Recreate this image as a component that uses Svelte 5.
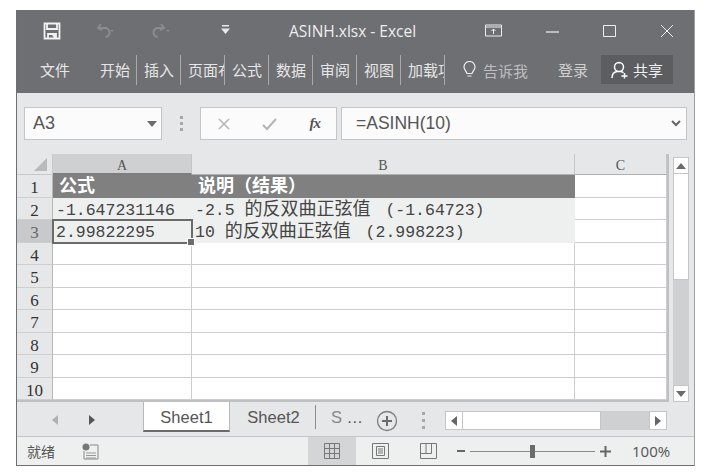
<script>
  const tabs = ['开始', '插入', '页面布', '公式', '数据', '审阅', '视图', '加载项'];
  const rows = [
    { n: 1, a: ['', '公式', ''], b: ['', '说明（结果）', ''], kind: 'head' },
    { n: 2, a: ['-1.647231146', '', ''], b: ['-2.5 ', '的反双曲正弦值', ' (-1.64723)'], kind: 'band' },
    { n: 3, a: ['2.99822295', '', ''], b: ['10 ', '的反双曲正弦值', ' (2.998223)'], kind: 'band' },
    { n: 4 }, { n: 5 }, { n: 6 }, { n: 7 }, { n: 8 }, { n: 9 }, { n: 10 }
  ];
</script>

{#snippet cellText(parts)}
  {#if parts}{parts[0]}{#if parts[1]}<span class="cjk">{parts[1]}</span>{/if}{parts[2]}{/if}
{/snippet}

<div class="window">
  <div class="titlebar">
    <div class="qat">
      <svg class="save" width="18" height="18" viewBox="0 0 18 18"><path d="M1.500 1.500h15v15h-15zM4 2v5h10V2M5 16v-4h8v4M9.500 13.500h2v2" fill="none" stroke="#f2f2f2" stroke-width="1.800"/></svg>
      <svg class="undo" width="20" height="16" viewBox="0 0 20 16"><path d="M5 1L2 5l4 2M2.500 5h6a4.500 4.500 0 0 1 1 9" fill="none" stroke="#8b8c8f" stroke-width="2"/><path d="M14 7h4l-2 2z" fill="#8b8c8f"/></svg>
      <svg class="redo" width="20" height="16" viewBox="0 0 20 16"><path d="M10 1l3 4-4 2M12.500 5h-5a4.500 4.500 0 0 0-1 9" fill="none" stroke="#8b8c8f" stroke-width="2"/><path d="M15 7h4l-2 2z" fill="#8b8c8f"/></svg>
      <svg class="more" width="9" height="9" viewBox="0 0 9 9"><path d="M1 0h7v1.500H1zM0 3.500h9L4.500 9z" fill="#e8e8e8"/></svg>
    </div>
    <div class="doc">ASINH.xlsx - Excel</div>
    <div class="winctl">
      <svg width="17" height="14" viewBox="0 0 17 14"><path d="M.5 1h16v11H.5zM1 3h15M8.500 10V5M6.500 7l2-2 2 2" fill="none" stroke="#eee" stroke-width="1"/></svg>
      <svg width="13" height="14" viewBox="0 0 13 14"><path d="M0 8h13" stroke="#eee" stroke-width="1.200"/></svg>
      <svg width="13" height="14" viewBox="0 0 13 14"><path d="M.5 1.500h12v11H.5z" fill="none" stroke="#eee" stroke-width="1"/></svg>
      <svg width="14" height="14" viewBox="0 0 14 14"><path d="M1 1l12 12M13 1L1 13" stroke="#eee" stroke-width="1"/></svg>
    </div>
  </div>

  <div class="menubar">
    <span class="file">文件</span>
    <div class="tabs">
      {#each tabs as t}
        <span class="tab">{t}</span>
      {/each}
    </div>
    <span class="tell">
      <svg width="13" height="18" viewBox="0 0 13 18"><path d="M4 12.500C3.500 10 1 9 1 6a5.500 5.500 0 0 1 11 0c0 3-2.500 4-3 6.500zM4.500 15h4" fill="none" stroke="#eee" stroke-width="1.200"/></svg>
      告诉我
    </span>
    <span class="login">登录</span>
    <span class="share">
      <svg width="18" height="18" viewBox="0 0 18 18"><path d="M8 1.500a4.500 4.500 0 0 1 0 9a4.500 4.500 0 0 1 0-9zM1 17c0-4 2-6 5-6.500M10 10.500c1 .2 1.800.6 2.500 1.200M13.500 12v5.500M10.500 15h6" fill="none" stroke="#fff" stroke-width="1.500"/></svg>
      共享
    </span>
  </div>

  <div class="formula">
    <div class="box name">
      <span>A3</span>
      <svg width="10" height="6" viewBox="0 0 10 6"><path d="M0 0h10L5 6z" fill="#6b6b6b"/></svg>
    </div>
    <div class="grip"><i></i><i></i><i></i></div>
    <div class="box fx">
      <svg width="14" height="14" viewBox="0 0 14 14"><path d="M2 2l10 10M12 2L2 12" stroke="#b4b4b4" stroke-width="1.500"/></svg>
      <svg width="16" height="14" viewBox="0 0 16 14"><path d="M1 8l4 4 9-10" fill="none" stroke="#b4b4b4" stroke-width="2"/></svg>
      <span class="fxlabel">fx</span>
    </div>
    <div class="box input">
      <span>=ASINH(10)</span>
      <svg width="10" height="7" viewBox="0 0 10 7"><path d="M1 1l4 4 4-4" fill="none" stroke="#666" stroke-width="2"/></svg>
    </div>
  </div>

  <div class="sheet">
    <div class="grid">
      <div class="corner"><svg width="13" height="13" viewBox="0 0 13 13"><path d="M13 0v13H0z" fill="#b9babb"/></svg></div>
      <div class="colhead sel">A</div>
      <div class="colhead">B</div>
      <div class="colhead">C</div>
      {#each rows as r}
        <div class="rowhead" class:sel={r.n === 3}>{r.n}</div>
        <div class="cell {r.kind ?? ''}" class:active={r.n === 3}>
          {@render cellText(r.a)}
          {#if r.n === 3}<span class="handle"></span>{/if}
        </div>
        <div class="cell {r.kind ?? ''}">{@render cellText(r.b)}</div>
        <div class="cell"></div>
      {/each}
    </div>
    <div class="vscroll">
      <div class="sbtn"><svg width="10" height="6" viewBox="0 0 10 6"><path d="M5 0l5 6H0z" fill="#6b6b6b"/></svg></div>
      <div class="thumb"></div>
      <div class="track"></div>
      <div class="sbtn"><svg width="10" height="6" viewBox="0 0 10 6"><path d="M0 0h10L5 6z" fill="#6b6b6b"/></svg></div>
    </div>
  </div>

  <div class="tabbar">
    <div class="nav">
      <svg width="6" height="10" viewBox="0 0 6 10"><path d="M6 0v10L0 5z" fill="#b0b0b0"/></svg>
      <svg width="6" height="10" viewBox="0 0 6 10"><path d="M0 0v10l6-5z" fill="#555"/></svg>
    </div>
    <div class="stab on">Sheet1</div>
    <div class="stab">Sheet2</div>
    <div class="stab cut"><span class="cutS">S</span> …</div>
    <svg class="add" width="22" height="22" viewBox="0 0 22 22"><circle cx="11" cy="11" r="9.500" fill="none" stroke="#7d7d7d" stroke-width="1.300"/><path d="M11 6v10M6 11h10" stroke="#6b6b6b" stroke-width="2"/></svg>
    <div class="grip small"><i></i><i></i><i></i></div>
    <div class="hscroll">
      <div class="hbtn"><svg width="6" height="10" viewBox="0 0 6 10"><path d="M6 0v10L0 5z" fill="#666"/></svg></div>
      <div class="hthumb"></div>
      <div class="htrack"></div>
      <div class="hbtn"><svg width="6" height="10" viewBox="0 0 6 10"><path d="M0 0v10l6-5z" fill="#666"/></svg></div>
    </div>
  </div>

  <div class="status">
    <span class="ready">就绪</span>
    <svg class="macro" width="17" height="17" viewBox="0 0 17 17"><circle cx="4" cy="4" r="3.500" fill="#777"/><path d="M8 2h8v14H2V8" fill="none" stroke="#888"/><path d="M4 10h10M4 12.500h10M4 15h10" stroke="#999"/></svg>
    <div class="views">
      <span class="view on"><svg width="16" height="16" viewBox="0 0 16 16"><path d="M.5.500h15v15H.5zM5.500 1v14M10.500 1v14M1 5.500h14M1 10.500h14" fill="none" stroke="#777"/></svg></span>
      <span class="view"><svg width="17" height="16" viewBox="0 0 17 16"><path d="M.5.500h16v15H.5zM4.500 3.500h8v9h-8zM6 6h5M6 8h5M6 10h5" fill="none" stroke="#777"/></svg></span>
      <span class="view"><svg width="17" height="16" viewBox="0 0 17 16"><path d="M.5.500h16v15H.5zM.5 10.500h11V.500M6 1v9" fill="none" stroke="#777"/></svg></span>
    </div>
    <div class="zoom">
      <span class="minus"></span>
      <span class="slider"><span class="knob"></span></span>
      <svg width="11" height="11" viewBox="0 0 11 11"><path d="M5.500 0v11M0 5.500h11" stroke="#666" stroke-width="2"/></svg>
    </div>
    <span class="pct">100%</span>
  </div>
</div>

<style>
  :global(body) {
    background: #fff;
  }

  .window {
    width: 679px;
    height: 456px;
    margin: 10px 0 0 16px;
    box-sizing: border-box;
    border: 1px solid #6d6e71;
    border-top: 0;
    border-right-color: #a0a0a0;
    background: #e6e7e8;
    display: flex;
    flex-direction: column;
    font-family: "Noto Sans CJK SC", "Liberation Sans", sans-serif;
    overflow: hidden;
  }

  .titlebar {
    height: 45px;
    flex: none;
    background: #6e6f72;
    display: flex;
    align-items: center;
    padding: 0 0 3px 26px;
    box-sizing: border-box;
    color: #eee;
  }

  .qat {
    display: flex;
    align-items: center;
    width: 230px;
    flex: none;
  }

  .undo { margin-left: 35px; }
  .redo { margin-left: 35px; }
  .more { margin-left: 50px; margin-top: -3px; }

  .doc {
    font: 15.500px "Open Sans", "Liberation Sans", sans-serif;
    width: 196px;
    flex: none;
    margin-left: 16px;
    white-space: nowrap;
  }

  .winctl {
    display: flex;
    align-items: center;
    gap: 44px;
  }

  .menubar {
    height: 38px;
    flex: none;
    background: #6e6f72;
    color: #e6e6e6;
    font-size: 15px;
    display: flex;
    align-items: flex-start;
    padding-left: 23px;
  }

  .file { width: 53px; flex: none; margin-top: 4px; }

  .tabs { display: flex; }

  .tab {
    width: 44px;
    box-sizing: border-box;
    height: 30px;
    flex: none;
    border-right: 1px solid #a9aaac;
    overflow: hidden;
    white-space: nowrap;
    padding: 4px 0 0 7px;
  }

  .tell {
    margin: 4px 0 0 18px;
    display: flex;
    align-items: center;
    gap: 7px;
    color: #bdbec0;
    width: 95px;
    flex: none;
    white-space: nowrap;
    height: 22px;
  }

  .tell svg { flex: none; }

  .login { margin-top: 4px; width: 43px; flex: none; color: #d0d0d0; }

  .share {
    background: #5c5d60;
    width: 72px;
    height: 29px;
    flex: none;
    display: flex;
    align-items: center;
    justify-content: center;
    gap: 4px;
    color: #f0f0f0;
  }

  .formula {
    height: 61px;
    flex: none;
    box-sizing: border-box;
    padding: 14px 7px;
    display: flex;
    background: #e6e7e8;
  }

  .box {
    box-sizing: border-box;
    background: #fbfbfb;
    border: 1px solid #c4c5c6;
    display: flex;
    align-items: center;
    height: 33px;
    flex: none;
  }

  .name {
    width: 138px;
    padding: 0 4px 0 8px;
    justify-content: space-between;
    font: 18px "Liberation Sans", sans-serif;
    color: #555;
  }

  .grip {
    width: 38px;
    flex: none;
    display: flex;
    flex-direction: column;
    align-items: center;
    justify-content: center;
    gap: 3px;
  }

  .grip i {
    width: 3px;
    height: 3px;
    background: #a8a8a8;
    display: block;
  }

  .fx {
    width: 137px;
    padding: 0 16px;
    justify-content: space-between;
  }

  .fxlabel {
    font: italic bold 15px "Liberation Serif", serif;
    color: #555;
    letter-spacing: -1px;
  }

  .input {
    width: 346px;
    margin-left: 4px;
    padding: 0 5px 0 14px;
    justify-content: space-between;
    font: 17.500px "Liberation Sans", sans-serif;
    color: #555;
  }

  .sheet {
    height: 248px;
    flex: none;
    display: flex;
  }

  .grid {
    width: 650px;
    flex: none;
    display: grid;
    grid-template-columns: 36px 139px 383px 92px;
    grid-template-rows: 21px repeat(10, 22.500px);
    background: #fff;
    border-right: 2px solid #bfc0c1;
    border-bottom: 2px solid #bfc0c1;
    font: 16.500px "Liberation Mono", "Noto Sans CJK SC", monospace;
    color: #444;
  }

  .corner {
    background: #e6e7e8;
    display: flex;
    align-items: flex-end;
    justify-content: flex-end;
    padding: 0 5px 3px 0;
    border-right: 1px solid #c8c8c8;
    border-bottom: 1px solid #c8c8c8;
  }

  .colhead {
    background: #e6e7e8;
    border-right: 1px solid #c4c5c6;
    border-bottom: 1px solid #b0b0b0;
    text-align: center;
    font: 14px/24px "Liberation Serif", serif;
    color: #555;
    overflow: hidden;
  }

  .colhead.sel {
    background: #cfd0d1;
    border-bottom: 2px solid #7d7d7d;
  }

  .rowhead {
    background: #e6e7e8;
    border-right: 1px solid #b8b8b8;
    border-bottom: 1px solid #cfcfcf;
    box-sizing: border-box;
    text-align: center;
    font: 17px/26px "Liberation Serif", serif;
    color: #333;
    overflow: hidden;
  }

  .rowhead.sel { background: #c8c9ca; color: #666; }

  .cell {
    box-sizing: border-box;
    border-right: 1px solid #cdcdcd;
    border-bottom: 1px solid #cdcdcd;
    padding-left: 3px;
    line-height: 25px;
    white-space: pre;
    position: relative;
    min-width: 0;
  }

  .cjk {
    font-size: 18px;
    margin-right: 5px;
    line-height: 1;
  }

  .head {
    background: #808080;
    color: #fff;
    font-weight: bold;
    border-color: #808080;
  }

  .head .cjk { margin-left: 3px; }

  .band {
    background: #eef0ef;
    border-right-color: #eef0ef;
    border-bottom-color: #eef0ef;
  }

  .active {
    outline: 2px solid #6b6b6b;
    outline-offset: -1px;
    z-index: 1;
  }

  .handle {
    position: absolute;
    right: -4px;
    bottom: -4px;
    width: 6px;
    height: 6px;
    background: #6b6b6b;
    border: 1px solid #fff;
  }

  .vscroll {
    flex: 1;
    display: flex;
    flex-direction: column;
    padding: 3px 5px 0 4px;
    box-sizing: border-box;
    width: 18px;
  }

  .sbtn {
    height: 17px;
    flex: none;
    background: #fff;
    border: 1px solid #c4c5c6;
    box-sizing: border-box;
    display: flex;
    align-items: center;
    justify-content: center;
  }

  .thumb {
    height: 105px;
    flex: none;
    background: #fff;
    border: 1px solid #c4c5c6;
    border-top: 0;
  }

  .track { flex: 1; background: #cfd0d1; }

  .tabbar {
    height: 35px;
    flex: none;
    display: flex;
    align-items: flex-start;
    border-bottom: 1px solid #c4c5c6;
    box-sizing: border-box;
    font: 16.500px "Liberation Sans", sans-serif;
    color: #555;
  }

  .nav {
    width: 126px;
    flex: none;
    display: flex;
    gap: 31px;
    padding: 13px 0 0 35px;
    box-sizing: border-box;
  }

  .stab {
    height: 30px;
    line-height: 30px;
    text-align: center;
    width: 87px;
    flex: none;
    box-sizing: border-box;
  }

  .stab.on {
    background: #fff;
    border-bottom: 2px solid #6b6b6b;
    border-left: 1px solid #b8b8b8;
    border-right: 1px solid #b8b8b8;
  }

  .stab.cut {
    width: 48px;
    height: 24px;
    line-height: 24px;
    margin: 3px 0 0 -2px;
    border-left: 1px solid #8d8d8d;
    white-space: nowrap;
    text-align: left;
    padding-left: 15px;
  }

  .cutS { color: #888; }

  .add { margin: 8px 0 0 13px; flex: none; }

  .grip.small { width: 43px; height: 26px; gap: 4px; margin: 5px 0 0 4px; }

  .hscroll {
    display: flex;
    height: 19px;
    width: 222px;
    flex: none;
    margin: 9px 0 0 0;
  }

  .hbtn {
    width: 18px;
    flex: none;
    background: #fff;
    border: 1px solid #c4c5c6;
    box-sizing: border-box;
    display: flex;
    align-items: center;
    justify-content: center;
  }

  .hthumb {
    width: 137px;
    flex: none;
    background: #fff;
    border: 1px solid #c4c5c6;
    border-left: 0;
  }

  .htrack { flex: 1; background: #cfd0d1; }

  .status {
    flex: 1;
    display: flex;
    align-items: center;
    background: #eef0f0;
    color: #555;
    font-size: 14px;
    padding-left: 10px;
  }

  .ready { width: 55px; flex: none; }
  .macro { flex: none; }

  .views {
    display: flex;
    margin-left: 209px;
    align-self: stretch;
  }

  .view {
    width: 48px;
    display: flex;
    align-items: center;
    justify-content: center;
  }

  .view.on { background: #d4d5d6; }

  .zoom {
    display: flex;
    align-items: center;
    margin-left: 5px;
    gap: 5px;
  }

  .minus { width: 8px; height: 2px; background: #666; }

  .slider {
    width: 125px;
    height: 1px;
    background: #8a8a8a;
    position: relative;
    display: block;
  }

  .knob {
    position: absolute;
    left: 60px;
    top: -6px;
    width: 5px;
    height: 13px;
    background: #6b6b6b;
  }

  .pct {
    margin-left: 21px;
    font: 15px "Open Sans", "Liberation Sans", sans-serif;
    color: #555;
  }
</style>
